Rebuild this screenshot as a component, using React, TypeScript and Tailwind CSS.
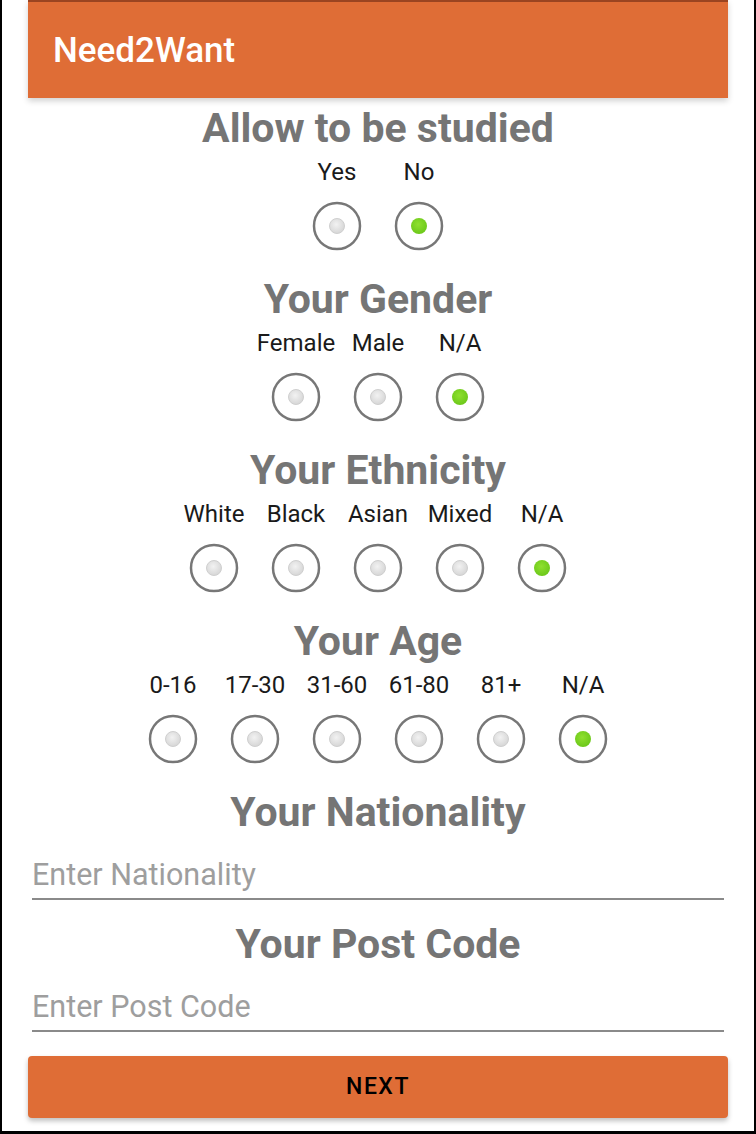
import React from "react";

const font = { fontFamily: "Roboto, 'Noto Sans', Arial, sans-serif" };

function Radio({ checked }: { checked: boolean }) {
  return (
    <svg width="50" height="50" viewBox="0 0 50 50">
      <defs>
        <radialGradient id="off" cx="45%" cy="40%" r="60%">
          <stop offset="0%" stopColor="#f2f2f2" />
          <stop offset="100%" stopColor="#d6d6d6" />
        </radialGradient>
        <radialGradient id="on" cx="45%" cy="40%" r="60%">
          <stop offset="0%" stopColor="#8fe02f" />
          <stop offset="100%" stopColor="#6cc81a" />
        </radialGradient>
      </defs>
      <circle cx="25" cy="25" r="23" fill="#ffffff" stroke="#777777" strokeWidth="2.5" />
      {checked ? (
        <circle cx="25" cy="25" r="8" fill="url(#on)" />
      ) : (
        <circle cx="25" cy="25" r="7.5" fill="url(#off)" stroke="#cfcfcf" strokeWidth="1" />
      )}
    </svg>
  );
}

function Heading({ children }: { children: React.ReactNode }) {
  return (
    <div className="h-[44px] flex items-center justify-center text-[41px] font-bold text-[#757575] leading-none whitespace-nowrap">
      {children}
    </div>
  );
}

function RadioGroup({ title, options, selected }: { title: string; options: string[]; selected: number }) {
  return (
    <div className="flex flex-col items-center">
      <Heading>{title}</Heading>
      <div className="mt-[8px] flex justify-center">
        {options.map((o) => (
          <div key={o} className="w-[82px] h-[28px] flex items-center justify-center text-[24px] text-[#1a1a1a] leading-none whitespace-nowrap">
            {o}
          </div>
        ))}
      </div>
      <div className="mt-[15px] flex justify-center">
        {options.map((o, i) => (
          <div key={o} className="w-[82px] flex items-center justify-center">
            <Radio checked={i === selected} />
          </div>
        ))}
      </div>
    </div>
  );
}

function Field({ placeholder }: { placeholder: string }) {
  return (
    <div className="mx-[4px] h-[66px] border-b-2 border-[#8a8a8a] flex items-end pb-[8px]">
      <span className="text-[30.5px] text-[#9e9e9e] leading-none">{placeholder}</span>
    </div>
  );
}

export default function App() {
  return (
    <div style={font} className="w-[756px] h-[1134px] bg-white border-l-2 border-r-2 border-b-[3px] border-black overflow-hidden">
      <div className="w-[700px] ml-[26px] flex flex-col">
        <div className="h-[98px] bg-[#df6d36] border-t-2 border-[#9a4421] shadow-[0_3px_6px_rgba(0,0,0,0.18)] flex items-center pl-[25px]">
          <span className="text-white text-[35px] font-medium leading-none">Need2Want</span>
        </div>
        <div className="mt-[8px] flex flex-col gap-[26px]">
          <RadioGroup title="Allow to be studied" options={["Yes", "No"]} selected={1} />
          <RadioGroup title="Your Gender" options={["Female", "Male", "N/A"]} selected={2} />
          <RadioGroup title="Your Ethnicity" options={["White", "Black", "Asian", "Mixed", "N/A"]} selected={4} />
          <RadioGroup title="Your Age" options={["0-16", "17-30", "31-60", "61-80", "81+", "N/A"]} selected={5} />
        </div>
        <div className="mt-[26px]">
          <Heading>Your Nationality</Heading>
          <Field placeholder="Enter Nationality" />
        </div>
        <div className="mt-[22px]">
          <Heading>Your Post Code</Heading>
          <Field placeholder="Enter Post Code" />
        </div>
        <button className="mt-[24px] h-[62px] bg-[#df6d36] rounded-[4px] shadow-[0_3px_5px_rgba(0,0,0,0.25)] flex items-center justify-center text-[23px] font-medium tracking-[1.5px] text-black">
          NEXT
        </button>
      </div>
    </div>
  );
}
